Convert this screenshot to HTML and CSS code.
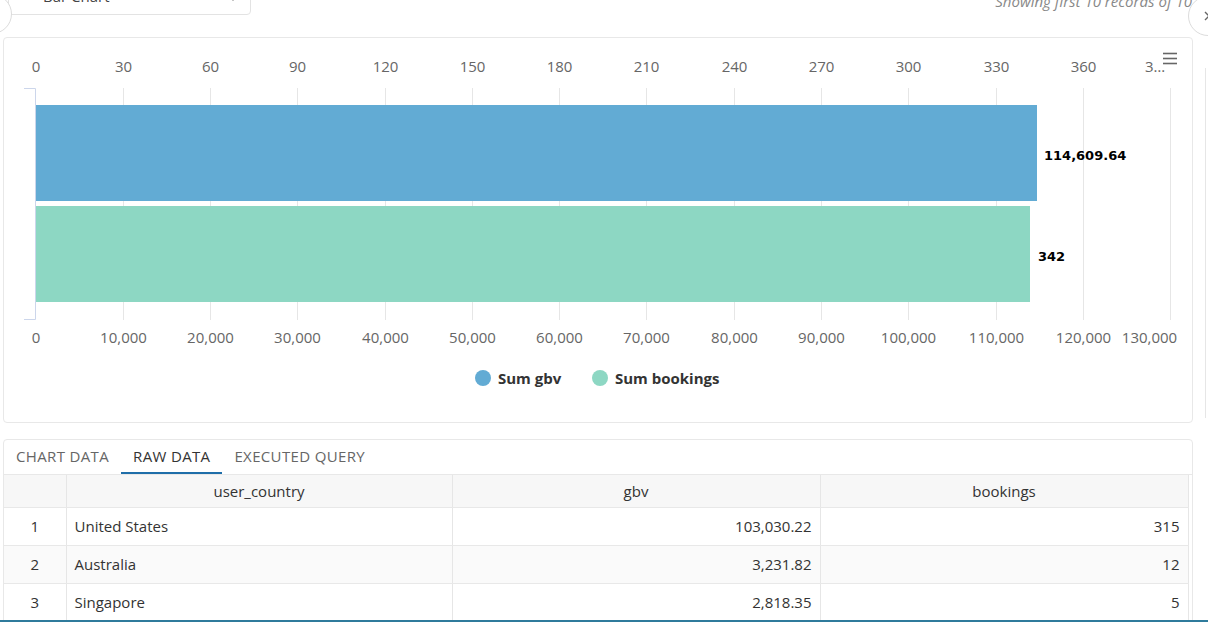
FILE: index.html
```html
<!DOCTYPE html>
<html>
<head>
<meta charset="utf-8">
<link rel="stylesheet" href="styles.css">
</head>
<body>
<div class="page">
  <div class="topbar">
    <div class="select">
      <span class="select-text">Bar Chart</span>
      <svg class="chev" width="10" height="6" viewBox="0 0 10 6"><path d="M1 1 L5 5 L9 1" fill="none" stroke="#999" stroke-width="1.5"/></svg>
    </div>
    <div class="showing">Showing first 10 records of 10</div>
    <div class="round-btn left-btn"></div>
    <div class="round-btn right-btn"><svg width="8" height="10" viewBox="0 0 8 10"><path d="M2 1 L6 5 L2 9" fill="none" stroke="#666" stroke-width="1.4"/></svg></div>
  </div>
  <div class="main">
    <div class="content">
      <div class="card chart-card">
        <svg class="chart" width="1188" height="384" viewBox="4 38 1188 384">
          <g class="grid" stroke="#e6e6e6" stroke-width="1">
            <line x1="123.5" y1="88" x2="123.5" y2="320"/>
            <line x1="210.5" y1="88" x2="210.5" y2="320"/>
            <line x1="297.5" y1="88" x2="297.5" y2="320"/>
            <line x1="385.5" y1="88" x2="385.5" y2="320"/>
            <line x1="472.5" y1="88" x2="472.5" y2="320"/>
            <line x1="559.5" y1="88" x2="559.5" y2="320"/>
            <line x1="646.5" y1="88" x2="646.5" y2="320"/>
            <line x1="734.5" y1="88" x2="734.5" y2="320"/>
            <line x1="821.5" y1="88" x2="821.5" y2="320"/>
            <line x1="908.5" y1="88" x2="908.5" y2="320"/>
            <line x1="996.5" y1="88" x2="996.5" y2="320"/>
            <line x1="1083.5" y1="88" x2="1083.5" y2="320"/>
            <line x1="1170.5" y1="88" x2="1170.5" y2="320"/>
          </g>
          <g stroke="#ccd6eb" stroke-width="1" fill="none">
            <path d="M24 88.5 H35.5 V319.5 H24"/>
          </g>
          <rect x="36" y="105" width="1001" height="96" fill="#62abd4"/>
          <rect x="36" y="206" width="994" height="96" fill="#8dd7c3"/>
          <g class="axis-label" text-anchor="middle">
            <text x="36" y="72">0</text>
            <text x="123.5" y="72">30</text>
            <text x="210.5" y="72">60</text>
            <text x="297.5" y="72">90</text>
            <text x="385.5" y="72">120</text>
            <text x="472.5" y="72">150</text>
            <text x="559.5" y="72">180</text>
            <text x="646.5" y="72">210</text>
            <text x="734.5" y="72">240</text>
            <text x="821.5" y="72">270</text>
            <text x="908.5" y="72">300</text>
            <text x="996.5" y="72">330</text>
            <text x="1083.5" y="72">360</text>
            <text x="1145" y="72" text-anchor="start">3…</text>
            <text x="36" y="343">0</text>
            <text x="123.5" y="343">10,000</text>
            <text x="210.5" y="343">20,000</text>
            <text x="297.5" y="343">30,000</text>
            <text x="385.5" y="343">40,000</text>
            <text x="472.5" y="343">50,000</text>
            <text x="559.5" y="343">60,000</text>
            <text x="646.5" y="343">70,000</text>
            <text x="734.5" y="343">80,000</text>
            <text x="821.5" y="343">90,000</text>
            <text x="908.5" y="343">100,000</text>
            <text x="996.5" y="343">110,000</text>
            <text x="1083.5" y="343">120,000</text>
            <text x="1149.5" y="343">130,000</text>
          </g>
          <rect x="1157" y="50" width="24" height="17" fill="#fff"/>
          <g stroke="#666" stroke-width="1.6">
            <line x1="1163" y1="53.5" x2="1177" y2="53.5"/>
            <line x1="1163" y1="58.5" x2="1177" y2="58.5"/>
            <line x1="1163" y1="63.5" x2="1177" y2="63.5"/>
          </g>
          <g class="data-label">
            <text x="1044" y="160">114,609.64</text>
            <text x="1038" y="261">342</text>
          </g>
          <circle cx="483" cy="378" r="8" fill="#62abd4"/>
          <text class="legend" x="498" y="384">Sum gbv</text>
          <circle cx="600" cy="378" r="8" fill="#8dd7c3"/>
          <text class="legend" x="615" y="384">Sum bookings</text>
        </svg>
      </div>
      <div class="card data-card">
        <div class="tabs">
          <div class="tab">Chart Data</div>
          <div class="tab active">Raw Data</div>
          <div class="tab">Executed Query</div>
        </div>
        <table class="grid-table">
          <colgroup>
            <col class="c-idx"><col class="c-country"><col class="c-num"><col class="c-num">
          </colgroup>
          <thead>
            <tr><th></th><th>user_country</th><th>gbv</th><th>bookings</th></tr>
          </thead>
          <tbody>
            <tr><td class="idx">1</td><td>United States</td><td class="num">103,030.22</td><td class="num">315</td></tr>
            <tr class="alt"><td class="idx">2</td><td>Australia</td><td class="num">3,231.82</td><td class="num">12</td></tr>
            <tr><td class="idx">3</td><td>Singapore</td><td class="num">2,818.35</td><td class="num">5</td></tr>
          </tbody>
        </table>
      </div>
    </div>
    <div class="side"></div>
  </div>
  <div class="footer-line"></div>
</div>
</body>
</html>
```
FILE: styles.css
```css
* { box-sizing: border-box; }
html, body { margin: 0; padding: 0; background: #fff; }
body { font-family: "Open Sans", "Liberation Sans", sans-serif; font-size: 15px; color: #333; }
.page { width: 1208px; height: 622px; overflow: hidden; position: relative; }

.topbar { height: 37px; display: flex; align-items: flex-start; position: relative; }
.select {
  margin-left: 8px; margin-top: -25px; width: 243px; height: 40px;
  border: 1px solid #e3e3e3; border-radius: 4px; background: #fff;
  display: flex; align-items: center; padding-left: 34px; padding-right: 12px;
}
.select-text { line-height: 38px; padding-top: 2px; color: #444; }
.chev { margin-left: auto; margin-top: 6px; }
.showing {
  margin-left: auto; margin-right: 16px; margin-top: -9px;
  line-height: 20px; font-style: italic; color: #888;
}
.round-btn {
  position: absolute; width: 40px; height: 40px; border-radius: 50%;
  border: 1px solid #dcdcdc; background: #fff;
  display: flex; align-items: center; justify-content: flex-start;
}
.left-btn { left: -28px; top: -6px; }
.right-btn { left: 1188px; top: -4px; padding-left: 14px; }

.main { display: flex; padding-left: 3px; }
.content { width: 1190px; display: flex; flex-direction: column; gap: 16px; }
.side { margin-left: 12px; margin-top: 31px; height: 350px; border-left: 1px solid #e6e6e6; }

.card { border: 1px solid #e8e8e8; border-radius: 4px; background: #fff; }
.chart-card { height: 386px; }
.chart { display: block; }
.axis-label text { font-family: "Open Sans", sans-serif; font-size: 15px; fill: #666; }
.data-label text { font-family: "DejaVu Sans", sans-serif; font-size: 13px; font-weight: bold; fill: #000; }
.legend { font-family: "Open Sans", sans-serif; font-size: 15px; font-weight: 700; fill: #333; }

.data-card { height: 200px; }
.tabs { display: flex; height: 35px; border-bottom: 1px solid #e8e8e8; }
.tab {
  padding: 0 12px; line-height: 33px; text-transform: uppercase; color: #666;
  letter-spacing: 0.35px;
  border-bottom: 2px solid transparent;
}
.tab.active { color: #333; border-bottom-color: #1f6ea9; }

.grid-table { width: 1184px; border-collapse: collapse; table-layout: fixed; }
.c-idx { width: 62px; }
.c-country { width: 386px; }
.c-num { width: 368px; }
.grid-table th, .grid-table td { border-right: 1px solid #e6e6e6; border-bottom: 1px solid #e8e8e8; padding: 0 8px; white-space: nowrap; }
.grid-table th { height: 32px; background: #f7f7f7; font-weight: 400; text-align: center; color: #333; }
.grid-table td { height: 38px; color: #333; }
.grid-table tr.alt td { background: #fafafa; }
.grid-table td.idx { text-align: center; }
.grid-table td.num { text-align: right; }

.footer-line { position: absolute; left: 0; right: 0; bottom: 0; height: 2px; background: #2f7b9c; }
```
